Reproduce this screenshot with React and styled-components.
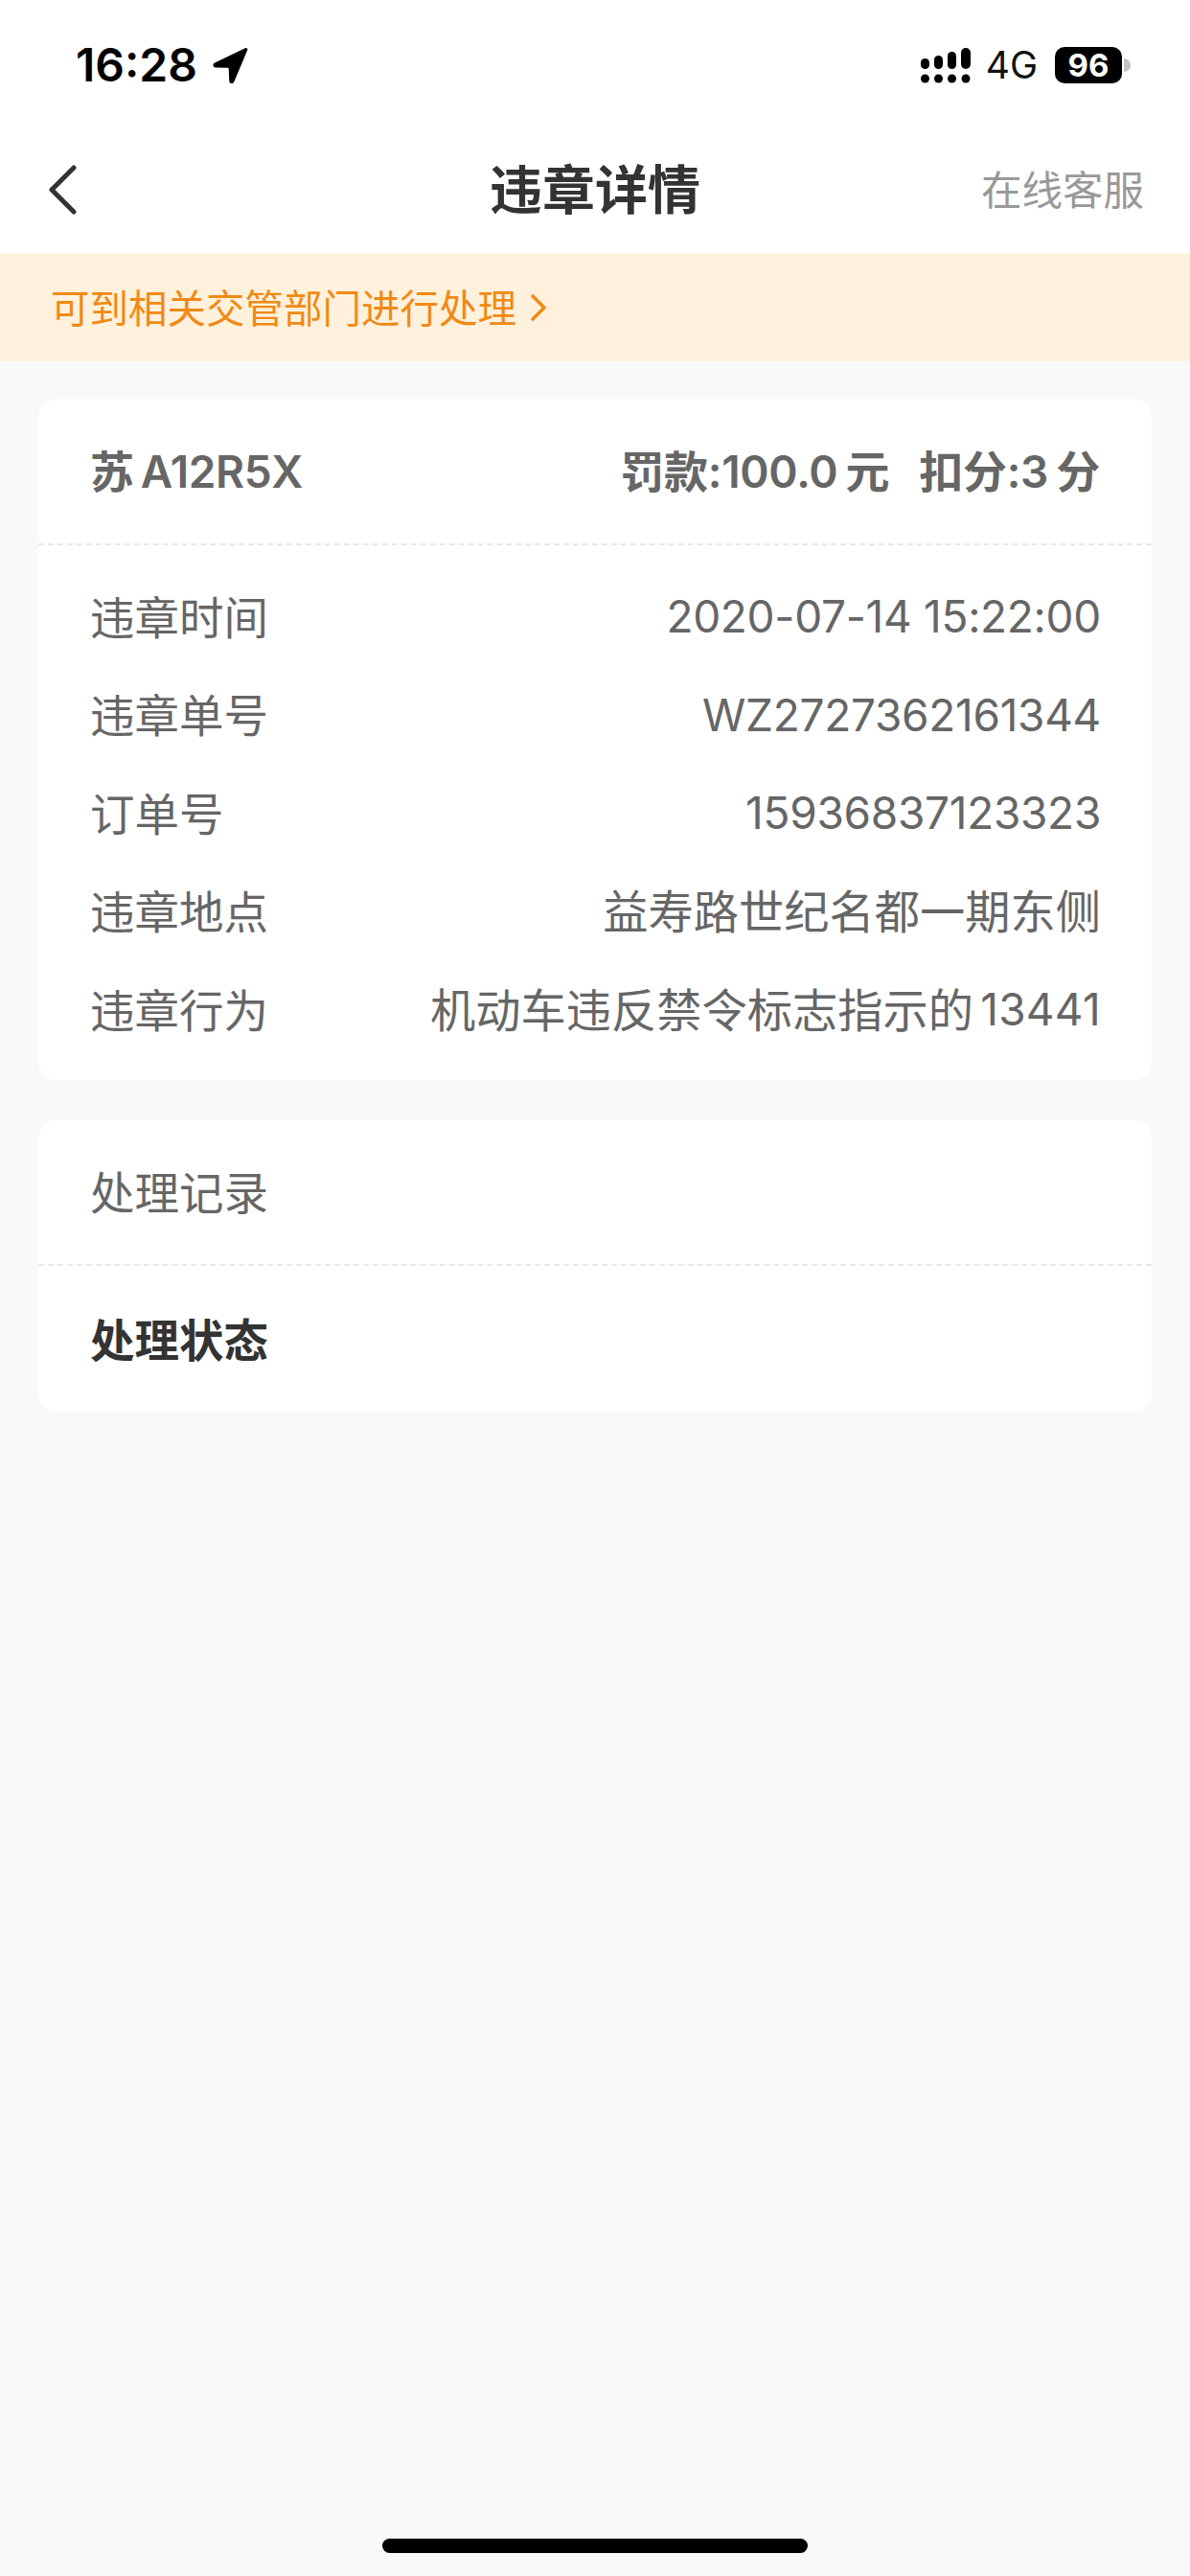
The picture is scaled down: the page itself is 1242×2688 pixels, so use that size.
import React from "react"
import styled, { createGlobalStyle } from "styled-components"

const GlobalStyle = createGlobalStyle`
    html, body {
        margin: 0;
        padding: 0;
        background: #F9F9F9;
    }
    * {
        box-sizing: border-box;
    }
`
const Page = styled.div`
    position: relative;
    width: 1242px;
    height: 2688px;
    background: #F9F9F9;
    font-family: Inter, "Noto Sans CJK SC", sans-serif;
    overflow: hidden;
`
const Top = styled.div`
    background: #fff;
`
const StatusBar = styled.div`
    height: 132px;
    padding: 46px 62px 0 79px;
    display: flex;
    justify-content: space-between;
    align-items: flex-start;
`
const TimeGroup = styled.div`
    display: flex;
    align-items: center;
    gap: 15px;
    height: 44px;
`
const Time = styled.span`
    font-size: 48px;
    font-weight: 600;
    line-height: 44px;
    color: #000;
`
const StatusIcons = styled.div`
    display: flex;
    align-items: center;
    height: 44px;
`
const Network = styled.span`
    margin: 0 18px 0 16px;
    font-size: 39px;
    line-height: 44px;
    color: #111;
`
const Battery = styled.div`
    width: 70px;
    height: 38px;
    border-radius: 10px;
    background: #000;
    color: #fff;
    font-size: 33px;
    font-weight: 700;
    line-height: 38px;
    text-align: center;
`
const BatteryNub = styled.div`
    width: 7px;
    height: 14px;
    margin-left: 2px;
    border-radius: 0 7px 7px 0;
    background: #C4C4C4;
`
const NavBar = styled.div`
    position: relative;
    height: 132px;
    display: flex;
    align-items: center;
    justify-content: space-between;
    padding: 0 48px 0 50px;
`
const NavTitle = styled.div`
    position: absolute;
    left: 0;
    right: 0;
    padding-bottom: 8px;
    text-align: center;
    font-size: 55px;
    font-weight: 700;
    color: #333;
`
const NavAction = styled.div`
    padding-bottom: 6px;
    font-size: 42.5px;
    color: #999;
`
const Notice = styled.div`
    height: 113px;
    padding: 0 0 0 53px;
    display: flex;
    align-items: center;
    gap: 14px;
    background: #FFF1DC;
    color: #F08A14;
    font-size: 40.5px;
`
const NoticeText = styled.span`
    padding-bottom: 3px;
`
const Content = styled.div`
    padding: 39px 40px 0 40px;
    display: flex;
    flex-direction: column;
    gap: 40px;
`
const Card = styled.div`
    background: #fff;
    border-radius: 20px;
    overflow: hidden;
`
const CardHead = styled.div`
    height: 153px;
    padding: 0 54px;
    display: flex;
    align-items: center;
    justify-content: space-between;
    border-bottom: 2px dashed #E8E8E8;
    font-size: 46.5px;
    color: #666;
`
const CardBody = styled.div`
    padding: 23px 53px 23px 54px;
`
const StatusRow = styled.div`
    height: 153px;
    padding: 0 54px 3px;
    display: flex;
    align-items: center;
    font-size: 46.5px;
    font-weight: 700;
    color: #333;
`
const Plate = styled.span`
    margin-bottom: 5px;
    font-size: 46px;
    font-weight: 600;
    letter-spacing: -0.4px;
    word-spacing: -4px;
    color: #666;
`
const Fees = styled.div`
    display: flex;
    gap: 31px;
    margin-bottom: 5px;
`
const Fee = styled.span`
    font-size: 46px;
    font-weight: 600;
    letter-spacing: -0.3px;
    word-spacing: -3px;
    color: #666;
`
const Row = styled.div`
    height: 102.5px;
    display: flex;
    align-items: center;
    justify-content: space-between;
    font-size: 46px;
    color: #666;
`
const Label = styled.span`
    margin-bottom: 4px;
    font-size: 46.5px;
`
const Value = styled.span`
    letter-spacing: -0.3px;
`
const CjkValue = styled.span`
    margin-bottom: 4px;
    font-size: 47.25px;
`
const MixedValue = styled.span`
    display: flex;
    align-items: center;
    gap: 7px;
`
const Digits = styled.span`
    letter-spacing: 0.3px;
`
const HomeBar = styled.div`
    position: absolute;
    left: 399px;
    top: 2649px;
    width: 444px;
    height: 15px;
    border-radius: 8px;
    background: #000;
`

const LocationArrow = () => (
    <svg width="38" height="38" viewBox="0 0 36 36">
        <path d="M33 1.2 3 15.6c-2.6 1.3-1.8 4.6 1 4.7l11.6.4c.7 0 1.2.5 1.2 1.2l.5 11.8c.1 2.7 3.4 3.4 4.6 1L35.2 3.4c.7-1.5-.7-2.9-2.2-2.2Z" fill="#000" />
    </svg>
)

const SignalIcon = () => (
    <svg width="52" height="37" viewBox="0 0 52 37" fill="#000">
        <rect x="0" y="11" width="9" height="11" rx="4.5" />
        <rect x="14" y="8" width="9" height="14" rx="4.5" />
        <rect x="28" y="4" width="9" height="18" rx="4.5" />
        <rect x="42" y="0" width="10" height="22" rx="5" />
        <circle cx="4.5" cy="32" r="4.5" />
        <circle cx="18.5" cy="32" r="4.5" />
        <circle cx="32.5" cy="32" r="4.5" />
        <circle cx="47" cy="32" r="4.5" />
    </svg>
)

const BackIcon = () => (
    <svg width="30" height="52" viewBox="0 0 30 52" fill="none">
        <path d="M27 3 4 26l23 23" stroke="#333" strokeWidth="5" strokeLinecap="round" strokeLinejoin="round" />
    </svg>
)

const NoticeArrow = () => (
    <svg width="18" height="30" viewBox="0 0 18 30" fill="none">
        <path d="M3 3l12 12L3 27" stroke="#F08A14" strokeWidth="3.6" strokeLinecap="round" strokeLinejoin="round" />
    </svg>
)

export default function App() {
    return (
        <Page>
            <GlobalStyle />
            <Top>
                <StatusBar>
                    <TimeGroup>
                        <Time>16:28</Time>
                        <LocationArrow />
                    </TimeGroup>
                    <StatusIcons>
                        <SignalIcon />
                        <Network>4G</Network>
                        <Battery>96</Battery>
                        <BatteryNub />
                    </StatusIcons>
                </StatusBar>
                <NavBar>
                    <BackIcon />
                    <NavTitle>违章详情</NavTitle>
                    <NavAction>在线客服</NavAction>
                </NavBar>
            </Top>
            <Notice>
                <NoticeText>可到相关交管部门进行处理</NoticeText>
                <NoticeArrow />
            </Notice>
            <Content>
                <Card>
                    <CardHead>
                        <Plate>苏 A12R5X</Plate>
                        <Fees>
                            <Fee>罚款:100.0 元</Fee>
                            <Fee>扣分:3 分</Fee>
                        </Fees>
                    </CardHead>
                    <CardBody>
                        <Row>
                            <Label>违章时间</Label>
                            <Value>2020-07-14 15:22:00</Value>
                        </Row>
                        <Row>
                            <Label>违章单号</Label>
                            <Value>WZ2727362161344</Value>
                        </Row>
                        <Row>
                            <Label>订单号</Label>
                            <Value>15936837123323</Value>
                        </Row>
                        <Row>
                            <Label>违章地点</Label>
                            <CjkValue>益寿路世纪名都一期东侧</CjkValue>
                        </Row>
                        <Row>
                            <Label>违章行为</Label>
                            <MixedValue>
                                <CjkValue>机动车违反禁令标志指示的</CjkValue>
                                <Digits>13441</Digits>
                            </MixedValue>
                        </Row>
                    </CardBody>
                </Card>
                <Card>
                    <CardHead><Label>处理记录</Label></CardHead>
                    <StatusRow>处理状态</StatusRow>
                </Card>
            </Content>
            <HomeBar />
        </Page>
    )
}
